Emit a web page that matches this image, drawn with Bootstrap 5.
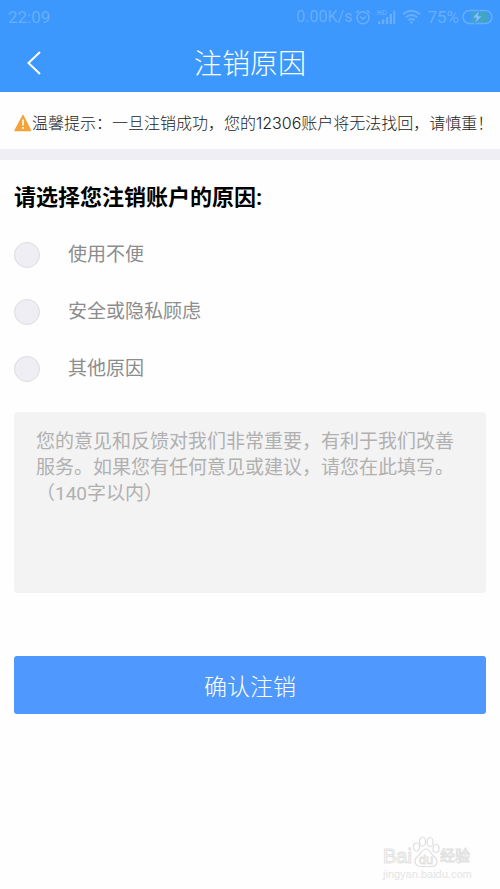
<!DOCTYPE html>
<html lang="zh-CN">
<head>
<meta charset="utf-8">
<meta name="viewport" content="width=device-width, initial-scale=1">
<title>注销原因</title>
<link href="https://cdn.jsdelivr.net/npm/bootstrap@5.3.0/dist/css/bootstrap.min.css" rel="stylesheet">
<style>
  body { font-family: Roboto, "Noto Sans CJK SC", sans-serif; background: #fefefe; color: #000; }
  .app-header { background: #3c98fc; color: #fff; }
  .status-bar { height: 34px; padding: 0 7px 0 8px; font-size: 17px; line-height: 34px; color: #67aefd; }
  .status-items { gap: 6px; }
  .status-pair { gap: 3px; }
  .status-speed { font-size: 16px; }
  .title-bar { height: 58px; padding: 0 22px; }
  .title-bar h1 { padding-top: 4px; font-size: 28px; line-height: 54px; font-weight: 300; }
  .back-btn { width: 24px; height: 30px; color: #fff; }
  .notice { padding: 4px 14px 0; height: 57px; font-family: Inter, "Noto Sans CJK SC", sans-serif; font-size: 16px; font-weight: 300; color: #222; }
  .notice-icon { width: 18px; height: 18px; }
  .divider-band { height: 11px; background: #efeef4; }
  .form-body { padding: 22px 14px 0; }
  .form-body legend { font-size: 22px; line-height: 32px; font-weight: 700; margin-bottom: 24px; }
  .reason { height: 57px; gap: 28px; }
  .reason .form-check-input { width: 26px; height: 26px; background-color: #efeef4; border: 1px solid #dcdcde; margin: 4px 0 0; }
  .reason label { padding-top: 4px; font-size: 19px; line-height: 26px; color: #8c8c8c; }
  .feedback { height: 181px; margin-top: 3px; padding: 17px 22px; resize: none; background: #f3f3f3; border: 0; border-radius: 4px; font-size: 19px; line-height: 26px; }
  .feedback::placeholder { color: #b0b0b0; }
  .confirm-btn { height: 58px; margin-top: 63px; padding: 6px 0 0; border: 0; border-radius: 3px; background: #4f98fd; color: #fff; font-size: 23px; font-weight: 300; }
  .watermark { width: 92px; margin: 0 25px 9px auto; color: #fff; -webkit-text-stroke: 1px #e2e2e2; font-family: "Liberation Sans", "Noto Sans CJK SC", sans-serif; }
  .brand-line { height: 32px; font-size: 20px; line-height: 24px; }
  .brand-line .brand-cn { font-size: 15px; }
  .brand-site { font-size: 11px; line-height: 12px; color: #e4e4e4; -webkit-text-stroke: 0; }
</style>
</head>
<body class="d-flex flex-column min-vh-100">
<header class="app-header">
  <div class="status-bar d-flex justify-content-between align-items-center">
    <span>22:09</span>
    <div class="status-items d-flex align-items-center">
      <div class="status-pair d-flex align-items-center">
        <span class="status-speed">0.00K/s</span>
        <svg width="16" height="16" viewBox="0 0 16 16" fill="none" stroke="currentColor" stroke-width="1.500" aria-hidden="true"><circle cx="8" cy="8.700" r="6"/><path d="M1 4 4 1.300M15 4 12 1.300M5.200 7.500 8 10l3-2.500"/></svg>
      </div>
      <svg width="19" height="16" viewBox="0 0 19 16" fill="currentColor" aria-hidden="true"><path d="M1 12.500h2.500V15H1zM5 10.500h2.300V15H5zM9 8h2.300v7H9zM12.700 5H15v10h-2.300zM16.300 1.500h2V15h-2z"/><path d="M1 1v5M4 1v5M1 3.500h3M6.200 1.500h1.200q2 0 2 2t-2 2H6.200z" fill="none" stroke="currentColor"/></svg>
      <svg width="19" height="16" viewBox="0 0 19 16" fill="none" stroke="currentColor" stroke-width="2" aria-hidden="true"><path d="M1 5.200q8.500-7 17 0M3.800 8.300q5.700-4.600 11.400 0M6.500 11.200q3-2.300 6 0"/><circle cx="9.500" cy="13.500" r="1.300" fill="currentColor" stroke="none"/></svg>
      <div class="status-pair d-flex align-items-center">
        <span>75%</span>
        <svg width="31" height="16" viewBox="0 0 31 16" aria-hidden="true"><path d="M9 3h12q5 0 5 5t-5 5H9z" fill="#43a6bb"/><rect x="1" y="1.500" width="29" height="13" rx="6.500" fill="none" stroke="currentColor" stroke-width="1.500"/><path d="m17.500 1-7 8h4l-2 6 7.500-8h-4z" fill="#8ac2fd" stroke="#3c98fc" stroke-width=".7"/></svg>
      </div>
    </div>
  </div>
  <div class="title-bar d-flex align-items-center justify-content-between">
    <button type="button" class="back-btn btn p-0 border-0 d-flex align-items-center" aria-label="返回">
      <svg width="24" height="26" viewBox="0 0 24 26" fill="none" stroke="currentColor" stroke-width="2" aria-hidden="true"><path d="M18 2 6.500 13 18 24"/></svg>
    </button>
    <h1 class="mb-0">注销原因</h1>
    <span class="back-btn"></span>
  </div>
</header>
<main class="d-flex flex-column flex-grow-1">
  <div class="notice d-flex align-items-center text-nowrap" role="alert">
    <svg class="notice-icon flex-shrink-0" viewBox="0 0 18 18" aria-hidden="true"><path d="M9 1.500 16.500 16.500H1z" fill="#f4a33b" stroke="#f4a33b" stroke-width="1.500" stroke-linejoin="round"/><path d="M9 5.500v6M9 13v2" stroke="#fff" stroke-width="1.600"/></svg>
    <span>温馨提示：一旦注销成功，您的12306账户将无法找回，请慎重！</span>
  </div>
  <div class="divider-band"></div>
  <form class="form-body">
    <fieldset>
      <legend>请选择您注销账户的原因:</legend>
      <div class="reason d-flex align-items-start"><input class="form-check-input" type="radio" name="reason" id="reason-use"><label for="reason-use">使用不便</label></div>
      <div class="reason d-flex align-items-start"><input class="form-check-input" type="radio" name="reason" id="reason-safe"><label for="reason-safe">安全或隐私顾虑</label></div>
      <div class="reason d-flex align-items-start"><input class="form-check-input" type="radio" name="reason" id="reason-other"><label for="reason-other">其他原因</label></div>
    </fieldset>
    <textarea class="feedback form-control" maxlength="140" aria-label="意见和反馈" placeholder="您的意见和反馈对我们非常重要，有利于我们改善服务。如果您有任何意见或建议，请您在此填写。（140字以内）"></textarea>
    <button type="button" class="confirm-btn btn w-100">确认注销</button>
  </form>
  <footer class="watermark mt-auto">
    <div class="brand-line d-flex align-items-end">
      <span>Bai</span>
      <svg width="28" height="32" viewBox="0 0 27 32" fill="#fff" stroke="#dedede" stroke-width="1.200" aria-hidden="true"><ellipse cx="4" cy="11" rx="3" ry="4"/><ellipse cx="10" cy="5.500" rx="3" ry="4.500"/><ellipse cx="17.500" cy="6" rx="3" ry="4.500"/><ellipse cx="23.500" cy="12.500" rx="3" ry="4"/><path d="M13.500 13C10 13 8 18 4.500 21S2 30 8 30.500h11c6 0 7-6 3-9.500S17 13 13.500 13z"/><text x="13.500" y="28" text-anchor="middle" font-size="13" stroke-width=".8">du</text></svg>
      <span class="brand-cn">经验</span>
    </div>
    <div class="brand-site">jingyan.baidu.com</div>
  </footer>
</main>
<script src="https://cdn.jsdelivr.net/npm/bootstrap@5.3.0/dist/js/bootstrap.bundle.min.js"></script>
</body>
</html>
